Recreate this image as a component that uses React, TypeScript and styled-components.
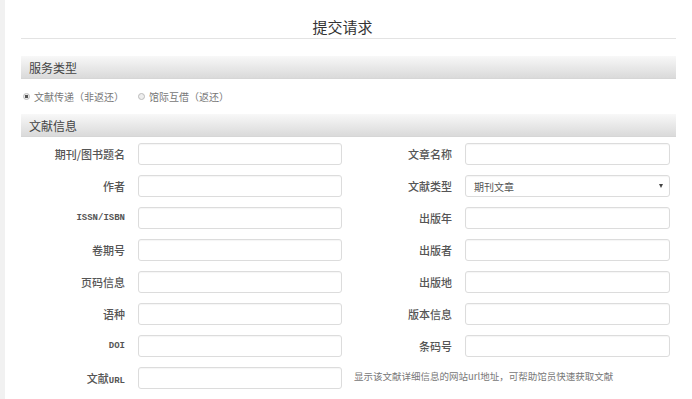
import React from 'react'
import styled, { createGlobalStyle } from 'styled-components'

const GlobalStyle = createGlobalStyle`
body {
    margin: 0;
    background: #fff;
    font-family: "Noto Sans CJK SC", "Noto Sans", sans-serif;
}
`
const Page = styled.div`
display: flex;
min-height: 100vh;
`
const SideStrip = styled.div`
width: 5px;
background: #f1f1f1;
flex-shrink: 0;
`
const Main = styled.div`
width: 655px;
padding-left: 16px;
`
const Title = styled.div`
height: 39px;
border-bottom: 1px solid #e3e3e3;
box-sizing: border-box;
display: flex;
align-items: flex-start;
justify-content: center;
padding-top: 17px;
padding-right: 12px;
font-size: 15px;
line-height: 20px;
color: #333;
`
const SectionBar = styled.div<{ top: number }>`
margin-top: ${p => p.top}px;
height: 23px;
background: linear-gradient(#f8f8f8, #dadada);
border-bottom: 1px solid #d6d6d6;
box-sizing: border-box;
padding-left: 8px;
display: flex;
align-items: center;
font-size: 12px;
color: #444;
`
const RadioRow = styled.div`
height: 35px;
display: flex;
align-items: center;
padding-left: 2px;
gap: 14px;
font-size: 10px;
color: #777;
`
const RadioItem = styled.label`
display: flex;
align-items: center;
gap: 4px;
`
const RadioDot = styled.span<{ checked?: boolean }>`
width: 7px;
height: 7px;
border-radius: 50%;
border: 1px solid #bbb;
box-sizing: border-box;
background: ${p => (p.checked ? 'radial-gradient(circle, #555 0 1.6px, #eee 2px)' : '#eee')};
`
const FormGrid = styled.div`
display: grid;
grid-template-columns: 117px 204px 123px 205px;
grid-auto-rows: 22px;
row-gap: 10px;
margin-top: 6px;
`
const Label = styled.div<{ mono?: boolean }>`
display: flex;
align-items: center;
justify-content: flex-end;
padding-right: 13px;
font-size: ${p => (p.mono ? '9px' : '11px')};
font-family: ${p => (p.mono ? '"Liberation Mono", "Noto Sans CJK SC", monospace' : '"Noto Sans CJK SC", sans-serif')};
font-weight: ${p => (p.mono ? 'bold' : '500')};
color: #555;
`
const Mono = styled.span`
font-family: "Liberation Mono", monospace;
font-size: 9px;
font-weight: bold;
`
const Field = styled.div`
border: 1px solid #dcdcdc;
border-radius: 3px;
background: #fff;
box-shadow: inset 0 1px 1px rgba(0, 0, 0, 0.04);
display: flex;
align-items: center;
justify-content: space-between;
padding: 0 6px 0 8px;
font-size: 10px;
color: #555;
`
const Caret = styled.span`
width: 0;
height: 0;
border-left: 2.5px solid transparent;
border-right: 2.5px solid transparent;
border-top: 4px solid #444;
`
const Hint = styled.div`
grid-column: 3 / 5;
display: flex;
align-items: center;
padding-left: 12px;
padding-bottom: 4px;
font-size: 9.5px;
color: #777;
white-space: nowrap;
`

type Row = [React.ReactNode, boolean, React.ReactNode, string?]

const rows: Row[] = [
    ['期刊/图书题名', false, '文章名称'],
    ['作者', false, '文献类型', '期刊文章'],
    ['ISSN/ISBN', true, '出版年'],
    ['卷期号', false, '出版者'],
    ['页码信息', false, '出版地'],
    ['语种', false, '版本信息'],
    ['DOI', true, '条码号'],
]

function App() {
    return (
        <Page>
            <GlobalStyle />
            <SideStrip />
            <Main>
                <Title>提交请求</Title>
                <SectionBar top={17}>服务类型</SectionBar>
                <RadioRow>
                    <RadioItem><RadioDot checked />文献传递（非返还）</RadioItem>
                    <RadioItem><RadioDot />馆际互借（返还）</RadioItem>
                </RadioRow>
                <SectionBar top={0}>文献信息</SectionBar>
                <FormGrid>
                    {rows.map(([left, mono, right, select], i) => (
                        <React.Fragment key={i}>
                            <Label mono={mono}>{left}</Label>
                            <Field />
                            <Label>{right}</Label>
                            <Field>
                                {select && <span>{select}</span>}
                                {select && <Caret />}
                            </Field>
                        </React.Fragment>
                    ))}
                    <Label><span>文献<Mono>URL</Mono></span></Label>
                    <Field />
                    <Hint>显示该文献详细信息的网站url地址，可帮助馆员快速获取文献</Hint>
                </FormGrid>
            </Main>
        </Page>
    )
}

export default App
